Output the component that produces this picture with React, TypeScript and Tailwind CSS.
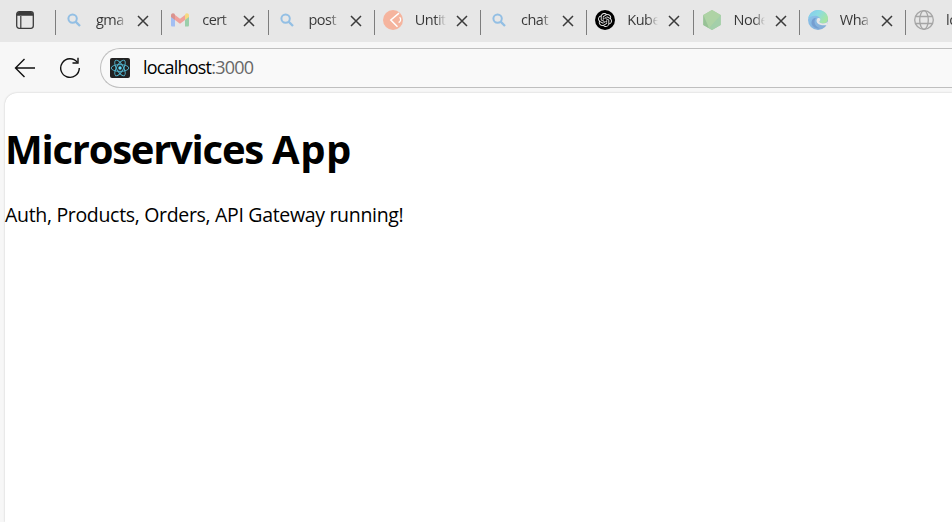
import type { ReactNode } from "react";
import { SiOpenai } from "react-icons/si";

const Search = () => (
  <svg width="20" height="20" viewBox="0 0 20 20" fill="none" stroke="#93bfe4" strokeWidth="2">
    <circle cx="8.6" cy="8.6" r="4.200" />
    <path d="M11.600 11.600 16 16" strokeWidth="2.300" />
  </svg>
);

const Gmail = () => (
  <svg width="20" height="20" viewBox="0 0 20 20">
    <path d="M1 6v9.2c0 .8.6 1.3 1.3 1.3H5V8z" fill="#a3bff3" />
    <path d="M19 6v9.2c0 .8-.6 1.3-1.3 1.3H15V8z" fill="#9bcfab" />
    <path d="M15 5v5l4-3V5.300c0-2-2.200-2.600-3.500-1.500z" fill="#f6d981" />
    <path d="M1 5.300V7l4 3V5l-.5-1.200C3.200 2.700 1 3.300 1 5.300z" fill="#d9928e" />
    <path d="M5 5v5l5 3.700 5-3.700V5l-5 3.700z" fill="#f0a19b" />
  </svg>
);

const Postman = () => (
  <svg width="20" height="20" viewBox="0 0 20 20" fill="none">
    <circle cx="10" cy="10" r="10" fill="#f5b49e" />
    <path d="M16 3.200 7.800 10l6.700 6.800" stroke="#fff" strokeWidth="1.500" />
    <path d="M16.600 7.300c1.800 1.400 1.200 4.600-1 5.200" stroke="#fff" strokeWidth="1.300" />
  </svg>
);

const OpenAI = () => (
  <div className="flex size-5 items-center justify-center rounded-full bg-black">
    <SiOpenai size={14} color="#e8e8e8" />
  </div>
);

const Node = () => (
  <svg width="20" height="20" viewBox="0 0 20 20">
    <path d="M10 0 18.700 5v10L10 20 1.300 15V5z" fill="#a6cda1" />
    <path d="M10 0 18.700 5v1L7 18.200 1.300 5z" fill="#aed3a5" />
    <path d="M1.300 5 7 18.200 1.300 15z" fill="#98c297" />
    <path d="M18.700 5v10L10 20l-3-1.800z" fill="#a3cfaa" />
  </svg>
);

const Edge = () => (
  <svg width="20" height="20" viewBox="0 0 20 20">
    <defs>
      <linearGradient id="edgeTop" x1="0" y1="0" x2="1" y2=".5">
        <stop offset="0" stopColor="#83c8ec" />
        <stop offset=".5" stopColor="#8bdbe4" />
        <stop offset="1" stopColor="#a6e5a3" />
      </linearGradient>
      <linearGradient id="edgeLow" x1="0" y1="0" x2="1" y2="1">
        <stop offset="0" stopColor="#8cc6ee" />
        <stop offset="1" stopColor="#83a9d3" />
      </linearGradient>
    </defs>
    <circle cx="10" cy="10" r="10" fill="url(#edgeLow)" />
    <path d="M.1 8.800C1 3.600 5 0 10 0c6 0 10 4 10 8.500 0 3-2.300 5-5 5-2 0-3.600-.8-3.600-1.700 0-.7 1-1.100 1-2.300 0-2-2.300-3.800-5.400-3.800C3.600 5.700 1 7 .1 8.800z" fill="url(#edgeTop)" />
    <path d="M8.400 7.800C5.500 10 5.500 16 12 18.500c-5 .3-9-2.700-8.500-6.500C4 9 6 7.800 8.400 7.800z" fill="#759ed0" />
    <path d="M9.600 8.200c-2 2-1.200 5.200 2.600 6.600 2.800 1 5.600.4 7 .1l.8-3.400c-1.200 1.300-3 2-5 2-2 0-3.600-.8-3.600-1.700 0-.7 1-1.100 1-2.300 0-1.200-1.600-1.800-2.800-1.300z" fill="#e7e7e7" />
  </svg>
);

const Globe = () => (
  <svg width="20" height="20" viewBox="0 0 20 20" fill="none" stroke="#a5a5a5" strokeWidth="1.300">
    <circle cx="10" cy="10" r="9.300" />
    <ellipse cx="10" cy="10" rx="4.300" ry="9.300" />
    <path d="M1.600 6.500h16.800M1.600 13.500h16.800" />
  </svg>
);

const ReactLogo = () => (
  <svg width="20" height="20" viewBox="0 0 20 20" fill="none" stroke="#53b8d2" strokeWidth=".9">
    <rect width="20" height="20" rx="2" fill="#222222" stroke="none" />
    <ellipse cx="10" cy="10" rx="8.800" ry="3.400" />
    <ellipse cx="10" cy="10" rx="8.800" ry="3.400" transform="rotate(60 10 10)" />
    <ellipse cx="10" cy="10" rx="8.800" ry="3.400" transform="rotate(120 10 10)" />
    <circle cx="10" cy="10" r="1.700" fill="#61dafb" stroke="none" />
  </svg>
);

const tabs: { icon: ReactNode; title: string }[] = [
  { icon: <Search />, title: "gma" },
  { icon: <Gmail />, title: "cert" },
  { icon: <Search />, title: "post" },
  { icon: <Postman />, title: "Untit" },
  { icon: <Search />, title: "chat" },
  { icon: <OpenAI />, title: "Kube" },
  { icon: <Node />, title: "Node" },
  { icon: <Edge />, title: "Wha" },
  { icon: <Globe />, title: "lo" },
];

export default function App() {
  return (
    <div className="flex h-[522px] w-[952px] flex-col overflow-hidden bg-[#f7f7f7] font-['Open_Sans','Noto_Sans',sans-serif] text-black">
      <div className="flex h-[42px] shrink-0 bg-[#e7e7e7]">
        <div className="flex w-[55px] shrink-0 pt-[11px] pl-4">
          <svg width="18" height="18" viewBox="0 0 18 18" fill="none">
            <rect x=".7" y=".7" width="16.600" height="16.600" rx="2.500" stroke="#3b3b3b" strokeWidth="1.300" />
            <path d="M1 4.800V3a2 2 0 0 1 2-2h12a2 2 0 0 1 2 2v1.800z" fill="#3b3b3b" />
            <path d="M4.800 5v12" stroke="#3b3b3b" strokeWidth="1.200" />
          </svg>
        </div>
        {tabs.map((t, i) => (
          <div key={i} className="flex h-10 w-[106.25px] shrink-0 items-center">
            <div className="mt-1 h-[25px] w-px shrink-0 bg-[#7d7d7d]" />
            <div className="ml-2 size-5 shrink-0">{t.icon}</div>
            <div className="ml-3 w-[31px] shrink-0 overflow-hidden bg-linear-to-r from-[#363636] from-65% to-transparent bg-clip-text text-[14.5px] leading-5 tracking-[-0.5px] whitespace-nowrap text-transparent">
              {t.title}
            </div>
            <svg className="mt-px ml-[10px] shrink-0" width="12" height="12" viewBox="0 0 12 12" fill="none" stroke="#3b3b3b" strokeWidth="1.500">
              <path d="M1 1l10 10M11 1 1 11" />
            </svg>
          </div>
        ))}
      </div>

      <div className="flex h-[51px] shrink-0 items-center">
        <svg className="ml-[14px] shrink-0" width="22" height="20" viewBox="0 0 22 20" fill="none" stroke="#111" strokeWidth="1.400">
          <path d="M10.500 1 1.500 10l9 9M1.500 10H21" />
        </svg>
        <svg className="ml-[23px] shrink-0" width="22" height="22" viewBox="0 0 22 22" fill="none" stroke="#111" strokeWidth="1.400">
          <path d="M18.300 5.300A9.300 9.300 0 1 0 20.300 11" />
          <path d="M19 .8V6h-5.500" />
        </svg>
        <div className="ml-[19px] flex h-10 flex-1 items-center rounded-l-[20px] border border-r-0 border-[#bfbfbf] bg-[#f9f9f9] pl-[9px]">
          <ReactLogo />
          <div className="ml-[13px] pb-px text-[18px] leading-6 tracking-[-0.8px]">
            localhost<span className="tracking-[-0.75px] text-[#686868]">:3000</span>
          </div>
        </div>
      </div>

      <div className="ml-[5px] flex-1 rounded-tl-[12px] bg-white pt-7 shadow-[0_0_2px_rgba(0,0,0,0.22)]">
        <h1 className="text-[40px] leading-[56px] font-bold tracking-[-1.25px]">
          Microservices <span className="tracking-[0.5px]">App</span>
        </h1>
        <p className="mt-[25px] text-[19.5px] leading-[26px] tracking-[-0.32px]">Auth, Products, Orders, API Gateway running!</p>
      </div>
    </div>
  );
}
